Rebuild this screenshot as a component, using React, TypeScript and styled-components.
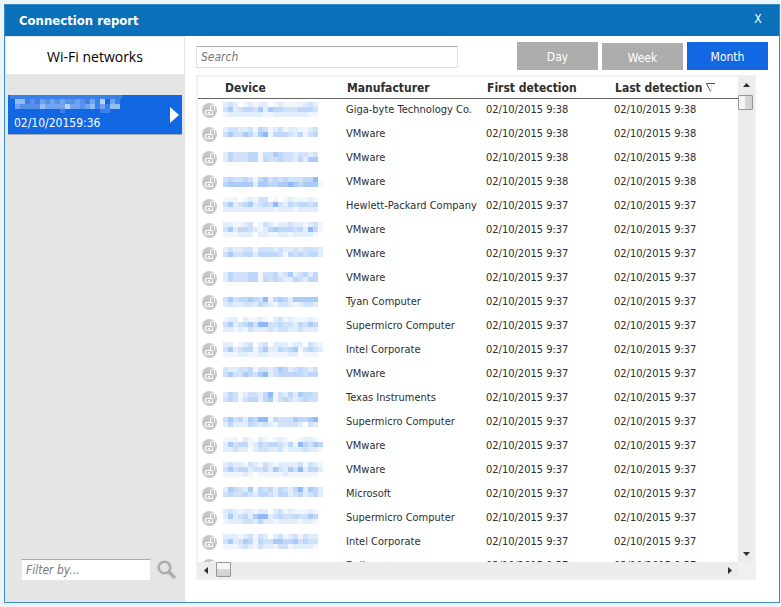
import React from "react";
import styled, { createGlobalStyle } from "styled-components";

const GlobalStyle = createGlobalStyle`
  * { box-sizing: border-box; }
  html, body, #root { height: 100%; }
  body {
    margin: 0;
    background: #ecf3f9;
    font-family: "DejaVu Sans Condensed", "Noto Sans", sans-serif;
    font-size: 11px;
    color: #2e2e2e;
  }
  button, input { font-family: inherit; border-radius: 0; }
`;

const Page = styled.div`
  height: 100vh;
  padding: 4px 1px 4px 4px;
`;

const Window = styled.main`
  height: 100%;
  display: flex;
  flex-direction: column;
  border: 1px solid #3a8cc8;
  background: #fff;
`;

const TitleBar = styled.header`
  flex: none;
  height: 31px;
  display: flex;
  align-items: center;
  justify-content: space-between;
  padding: 0 14px;
  background: #0a70b9;
  color: #fff;
`;

const Title = styled.h1`
  margin: 0;
  font-size: 13px;
  line-height: 16px;
`;

const CloseButton = styled.button`
  width: 14px;
  height: 18px;
  margin-bottom: 4px;
  padding: 0;
  border: 0;
  background: none;
  color: #fff;
  font-size: 12px;
  line-height: 18px;
`;

const Body = styled.div`
  flex: 1;
  min-height: 0;
  display: flex;
`;

const Sidebar = styled.aside`
  flex: none;
  width: 180px;
  display: flex;
  flex-direction: column;
  background: #e5e5e5;
`;

const SidebarTitle = styled.h2`
  height: 38px;
  margin: 0;
  border: 1px solid #e5e5e5;
  border-bottom: 0;
  background: #fff;
  color: #000;
  font: 400 14px/39px "Open Sans", sans-serif;
  text-align: center;
`;

const NetworkButton = styled.button`
  display: flex;
  align-items: center;
  justify-content: space-between;
  height: 40px;
  margin: 21px 3px 0;
  padding: 0 3px 0 2px;
  border: 0;
  border-bottom: 1px solid #a9acb4;
  background: #1267e2;
  color: #fff;
  font-size: 12px;
  text-align: left;
`;

const NetworkText = styled.span`
  display: flex;
  flex-direction: column;
  height: 100%;
`;

const NetworkTime = styled.span`
  padding-left: 4px;
  line-height: 16px;
`;

const Filter = styled.div`
  display: flex;
  align-items: center;
  gap: 6px;
  margin: auto 8px 21px 16px;
`;

const FilterInput = styled.input`
  width: 130px;
  height: 22px;
  padding: 0 4px;
  border: 1px solid #e3e9ef;
  border-top-color: #abadb3;
  background: #fff;
  font-size: 12px;
  font-style: italic;
  &::placeholder { color: #7a7a7a; }
`;

const IconButton = styled.button`
  display: flex;
  padding: 0;
  border: 0;
  background: none;
`;

const Content = styled.section`
  flex: 1;
  min-width: 0;
  display: flex;
  flex-direction: column;
  gap: 5px;
  padding: 6px 11px 22px;
`;

const Toolbar = styled.div`
  display: flex;
  align-items: flex-end;
  justify-content: space-between;
`;

const SearchInput = styled.input`
  width: 262px;
  height: 22px;
  margin-bottom: 2px;
  padding: 0 4px;
  border: 1px solid #dfe1ea;
  border-top-color: #abadb3;
  border-radius: 1px;
  background: #fff;
  font-size: 12px;
  font-style: italic;
  &::placeholder { color: #777; }
`;

const Periods = styled.div`
  display: flex;
  align-items: flex-end;
  gap: 4px;
`;

const PeriodButton = styled.button<{ $active?: boolean; $short?: boolean }>`
  width: 81px;
  height: ${(p) => (p.$short ? 27 : 28)}px;
  padding: 2px 0 0;
  border: 0;
  background: ${(p) => (p.$active ? "#1267e2" : "#adadad")};
  color: #fff;
  font-size: 12px;
`;

const ListFrame = styled.div`
  flex: 1;
  min-height: 0;
  display: grid;
  grid-template: minmax(0, 1fr) 16px / minmax(0, 1fr) 16px;
  margin-right: 12px;
  border: 2px solid #f0f0f0;
`;

const TableArea = styled.div`
  overflow: hidden;
`;

const Table = styled.table`
  width: 100%;
  table-layout: fixed;
  border-collapse: separate;
  border-spacing: 0;
`;

const Col = styled.col<{ $width?: number }>`
  width: ${(p) => (p.$width ? `${p.$width}px` : "auto")};
`;

const HeadCell = styled.th`
  height: 22px;
  padding: 1px 0 0 1px;
  border-bottom: 1px solid #666;
  font-size: 12px;
  line-height: 20px;
  text-align: left;
  white-space: nowrap;
`;

const DeviceHead = styled(HeadCell)`
  padding-left: 2px;
`;

const Cell = styled.td`
  height: 24px;
  padding: 1px 0 0;
  line-height: 20px;
  vertical-align: top;
  white-space: nowrap;
`;

const LockCell = styled(Cell)`
  padding: 4px 0 0 4px;
`;

const DeviceCell = styled(Cell)<{ $top: number }>`
  padding-top: ${(p) => p.$top}px;
`;

const Drawing = styled.svg`
  display: block;
`;

const SortMark = styled.svg`
  margin-left: 4px;
`;

const VBar = styled.div`
  display: flex;
  flex-direction: column;
  background: #ececec;
`;

const HBar = styled.div`
  display: flex;
  background: #ececec;
`;

const Corner = styled.div`
  background: #f0f0f0;
`;

const ArrowButton = styled.button<{ $end?: boolean }>`
  flex: none;
  display: flex;
  align-items: center;
  justify-content: center;
  width: 16px;
  height: 16px;
  margin: ${(p) => (p.$end ? "auto 0 0 auto" : "0")};
  padding: 0;
  border: 0;
  background: none;
`;

const Thumb = styled.div<{ $vertical?: boolean }>`
  flex: none;
  width: 15px;
  height: 15px;
  margin: ${(p) => (p.$vertical ? "2px 0 0 0" : "0 0 0 2px")};
  border: 1px solid #979797;
  border-radius: 1px;
  background: linear-gradient(${(p) => (p.$vertical ? "90deg" : "180deg")}, #f5f5f5 0 45%, #d9d9dc 50%, #cfcfd2);
`;

const SHADES = ["none", "#f1f6fe", "#e1edfd", "#d0e2fb", "#bfd7f9", "#abcbf7", "#8fbaf7"];

function Mosaic({ rows }: { rows: string[] }) {
  const width = Math.max(...rows.map((r) => r.length)) * 5;
  return (
    <Drawing width={width} height={rows.length * 5} shapeRendering="crispEdges" aria-hidden="true">
      {rows.flatMap((row, y) =>
        [...row].map((shade, x) => (
          <rect key={`${x}-${y}`} x={x * 5} y={y * 5} width="5" height="5" fill={SHADES[+shade]} />
        )),
      )}
    </Drawing>
  );
}

const NAME_SHADES = ["none", "#3b80e8", "#5690ec", "#70a4f0", "#94bdf6", "#b4d2fa"];
const NETWORK_NAME = ["441213232322321315031", "322224333353323413144"];

function NetworkName() {
  return (
    <Drawing width="112" height="20" shapeRendering="crispEdges" aria-hidden="true">
      <rect width="112" height="4" fill="#3b80e8" />
      {NETWORK_NAME.flatMap((row, y) =>
        [...row].map((s, x) => (
          <rect key={`${x}-${y}`} x={5 + x * 5} y={4 + y * 5} width="5" height="5" fill={NAME_SHADES[+s]} />
        )),
      )}
      <rect x="50" y="14" width="5" height="4" fill="#3b80e8" />
      <rect x="90" y="14" width="10" height="4" fill="#3b80e8" />
    </Drawing>
  );
}

function LockIcon() {
  return (
    <Drawing width="15" height="15" viewBox="0 0 15 15" fill="none" aria-hidden="true">
      <circle cx="7.5" cy="7.5" r="7.5" fill="#c5c5c5" />
      <path d="M3.5 7.5h7v4h-7zM8.5 7V3.5q0-.9.9-.9h2.200q.9 0 .9.900V7" stroke="#fff" />
      <rect x="6" y="9" width="2" height="1.500" fill="#fff" />
    </Drawing>
  );
}

function Arrow({ points, w, h }: { points: string; w: number; h: number }) {
  return (
    <Drawing width={w} height={h} aria-hidden="true">
      <polygon points={points} fill="#303030" />
    </Drawing>
  );
}

type Row = { maker: string; time: string; top: number; name: string[] };

const DEVICES: Row[] = [
  { maker: "Giga-byte Technology Co.", time: "9:38", top: 3, name: ["2320121220121111232", "3523443525443334443", "1222222211222222211"] },
  { maker: "VMware", time: "9:38", top: 4, name: ["2332231431231221123", "3533542561444324134"] },
  { maker: "VMware", time: "9:38", top: 5, name: ["2433344133543323323", "2433344143343324255"] },
  { maker: "VMware", time: "9:38", top: 6, name: ["34334314534343334460", "45555525544556545551"] },
  { maker: "Hewlett-Packard Company", time: "9:37", top: 2, name: ["1110121330101211121", "3523452343632434434", "2222222222122212222"] },
  { maker: "VMware", time: "9:37", top: 3, name: ["22112301321223221231", "35244321245444342641", "11122202211221222210"] },
  { maker: "VMware", time: "9:37", top: 4, name: ["23223313332322323332", "35334424444314343442"] },
  { maker: "VMware", time: "9:37", top: 5, name: ["2433344133423523424", "2433344143432243244"] },
  { maker: "Tyan Computer", time: "9:37", top: 6, name: ["3534454361454255555", "2322332432133212332"] },
  { maker: "Supermicro Computer", time: "9:37", top: 2, name: ["1220211210231211121", "3523453663343324354", "2212132223233223222"] },
  { maker: "Intel Corporate", time: "9:37", top: 3, name: ["22012302302221220321", "35234413522434513432", "11122112211112201110"] },
  { maker: "VMware", time: "9:37", top: 4, name: ["3223341332354234323", "3533543562344444344"] },
  { maker: "Texas Instruments", time: "9:37", top: 5, name: ["2431233246132425443", "3431344245134323433"] },
  { maker: "Supermicro Computer", time: "9:37", top: 6, name: ["3534254661433354456", "2422243232133332032"] },
  { maker: "VMware", time: "9:37", top: 2, name: ["11102102101210012210", "25344124344324164354", "22322023322312223221"] },
  { maker: "VMware", time: "9:37", top: 3, name: ["23221321321222231321", "35344233425325362442", "11112101111121111110"] },
  { maker: "Microsoft", time: "9:37", top: 4, name: ["25432514342432462542", "34334324432442342342"] },
  { maker: "Supermicro Computer", time: "9:37", top: 2, name: ["2321221220231211121", "2523425662343343354", "1222332422122221221"] },
  { maker: "Intel Corporate", time: "9:37", top: 3, name: ["2221231320231231322", "3523541433554453433", "1112321322133122221"] },
  { maker: "Dell", time: "9:37", top: 8, name: ["2332231431231221123", "3533542561444324134"] },
];

export default function App() {
  return (
    <>
      <GlobalStyle />
      <Page>
        <Window>
          <TitleBar>
            <Title>Connection report</Title>
            <CloseButton aria-label="Close">X</CloseButton>
          </TitleBar>
          <Body>
            <Sidebar>
              <SidebarTitle>Wi-Fi networks</SidebarTitle>
              <NetworkButton>
                <NetworkText>
                  <NetworkName />
                  <NetworkTime>02/10/20159:36</NetworkTime>
                </NetworkText>
                <svg width="9" height="16" aria-hidden="true">
                  <polygon points="0,0 9,8 0,16" fill="#fff" />
                </svg>
              </NetworkButton>
              <Filter>
                <FilterInput type="text" placeholder="Filter by..." aria-label="Filter by" />
                <IconButton aria-label="Filter">
                  <svg width="20" height="20" fill="none" stroke="#adadad" aria-hidden="true">
                    <circle cx="7.500" cy="7.500" r="5.800" strokeWidth="2.600" />
                    <path d="M11.500 11.500L18 18" strokeWidth="3.600" />
                  </svg>
                </IconButton>
              </Filter>
            </Sidebar>
            <Content>
              <Toolbar>
                <SearchInput type="text" placeholder="Search" aria-label="Search" />
                <Periods>
                  <PeriodButton>Day</PeriodButton>
                  <PeriodButton $short>Week</PeriodButton>
                  <PeriodButton $active>Month</PeriodButton>
                </Periods>
              </Toolbar>
              <ListFrame>
                <TableArea>
                  <Table>
                    <colgroup>
                      <Col $width={25} />
                      <Col $width={123} />
                      <Col $width={140} />
                      <Col $width={128} />
                      <Col />
                    </colgroup>
                    <thead>
                      <tr>
                        <HeadCell />
                        <DeviceHead>Device</DeviceHead>
                        <HeadCell>Manufacturer</HeadCell>
                        <HeadCell>First detection</HeadCell>
                        <HeadCell>
                          Last detection
                          <SortMark width="9" height="9" fill="none" aria-hidden="true">
                            <path d="M0 .5h9M.5 .5l4 8" stroke="#555" />
                            <path d="M5.500 1v7" stroke="#ddd" />
                          </SortMark>
                        </HeadCell>
                      </tr>
                    </thead>
                    <tbody>
                      {DEVICES.map((d, i) => (
                        <tr key={i}>
                          <LockCell><LockIcon /></LockCell>
                          <DeviceCell $top={d.top}><Mosaic rows={d.name} /></DeviceCell>
                          <Cell>{d.maker}</Cell>
                          <Cell>02/10/2015 {d.time}</Cell>
                          <Cell>02/10/2015 {d.time}</Cell>
                        </tr>
                      ))}
                    </tbody>
                  </Table>
                </TableArea>
                <VBar>
                  <ArrowButton aria-label="Scroll up"><Arrow w={7} h={4} points="0,4 3.5,0 7,4" /></ArrowButton>
                  <Thumb $vertical />
                  <ArrowButton $end aria-label="Scroll down"><Arrow w={7} h={4} points="0,0 7,0 3.5,4" /></ArrowButton>
                </VBar>
                <HBar>
                  <ArrowButton aria-label="Scroll left"><Arrow w={4} h={7} points="4,0 4,7 0,3.5" /></ArrowButton>
                  <Thumb />
                  <ArrowButton $end aria-label="Scroll right"><Arrow w={4} h={7} points="0,0 4,3.5 0,7" /></ArrowButton>
                </HBar>
                <Corner />
              </ListFrame>
            </Content>
          </Body>
        </Window>
      </Page>
    </>
  );
}
